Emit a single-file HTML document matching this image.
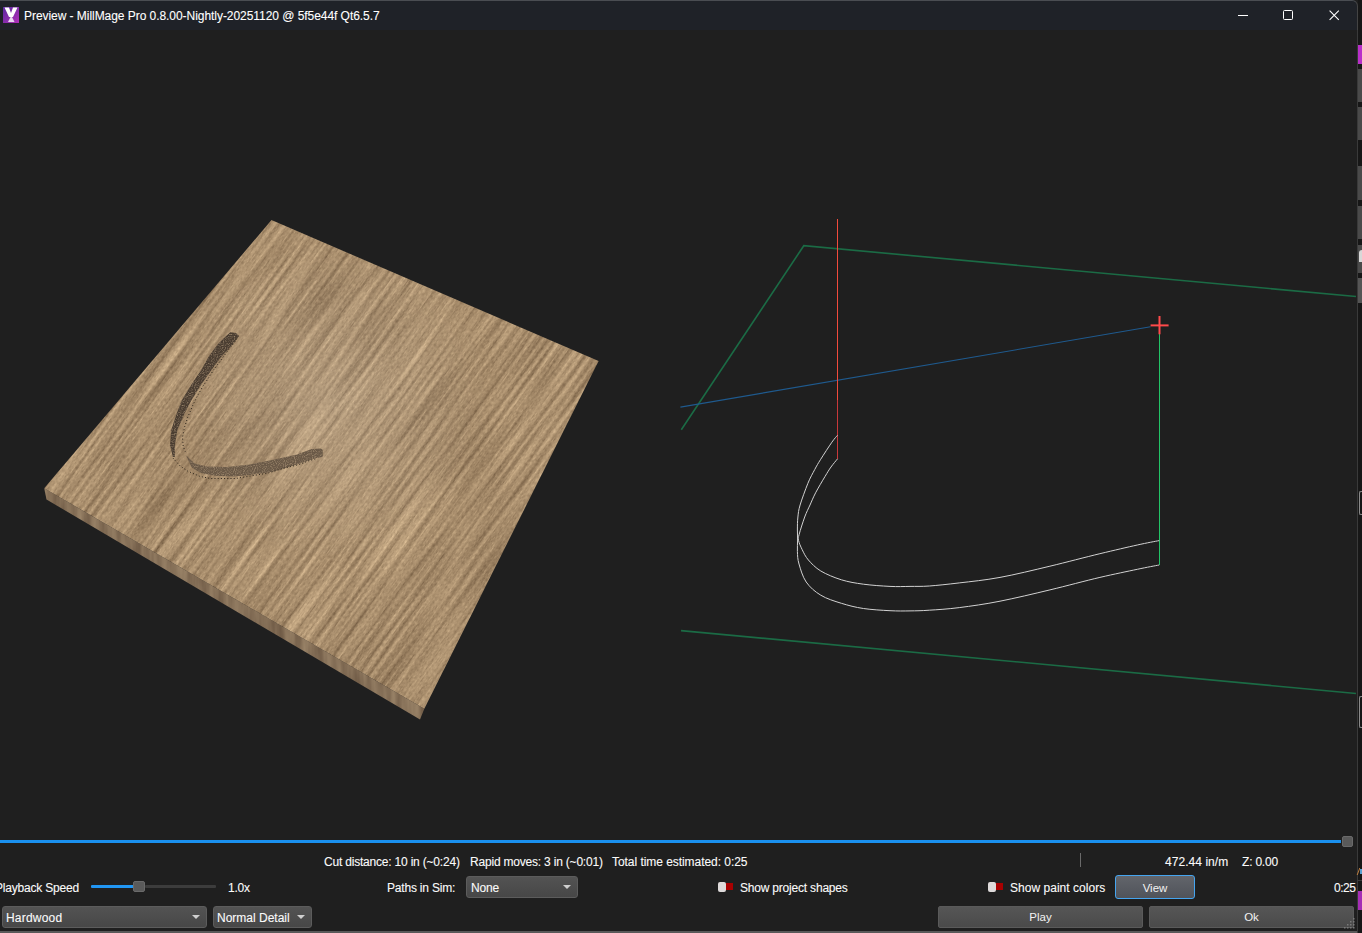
<!DOCTYPE html>
<html><head><meta charset="utf-8">
<style>
*{margin:0;padding:0;box-sizing:border-box}
html,body{width:1362px;height:933px;overflow:hidden;background:#1f1f1f;font-family:"Liberation Sans",sans-serif;color:#fff}
.abs{position:absolute}
#title{left:0;top:0;width:1358px;height:30px;background:#1f2228;border-top:1px solid #4a4d52;border-right:1px solid #444;border-top-right-radius:6px}
.t{position:absolute;white-space:nowrap;font-size:12px;letter-spacing:-0.2px;line-height:14px;color:#fafafa;-webkit-text-stroke:0.2px rgba(255,255,255,0.6)}
.combo{position:absolute;background:linear-gradient(#535353,#474747);border:1px solid #5c5c5c;border-radius:3px}
.btn{position:absolute;background:linear-gradient(#565656,#4a4a4a);border:1px solid #5a5a5a;border-radius:2px;text-align:center;font-size:11.5px;color:#f2f2f2}
.arrow{position:absolute;width:0;height:0;border-left:4px solid transparent;border-right:4px solid transparent;border-top:4px solid #cfcfcf}
</style></head>
<body>
<div id="title" class="abs"></div>
<div class="abs" style="left:1358px;top:0;width:4px;height:933px;background:#171717"></div>
<div class="abs" style="left:1357px;top:30px;width:1px;height:903px;background:#3a3a3a"></div>
<div class="abs" style="left:1358px;top:45px;width:4px;height:19px;background:#b92fc9"></div>
<div class="abs" style="left:1358px;top:69px;width:4px;height:33px;background:#4a4a4a"></div>
<div class="abs" style="left:1358px;top:107px;width:4px;height:33px;background:#4a4a4a"></div>
<div class="abs" style="left:1358px;top:166px;width:4px;height:34px;background:#4a4a4a"></div>
<div class="abs" style="left:1358px;top:206px;width:4px;height:33px;background:#4a4a4a"></div>
<div class="abs" style="left:1358px;top:245px;width:4px;height:28px;background:#4a4a4a"></div>
<div class="abs" style="left:1359px;top:250px;width:3px;height:12px;background:#d8d8d8;border-top-left-radius:3px"></div>
<div class="abs" style="left:1358px;top:278px;width:4px;height:25px;background:#555"></div>
<div class="abs" style="left:1359px;top:491px;width:3px;height:24px;border:1px solid #8a8a8a;border-right:none;border-radius:2px 0 0 2px"></div>
<div class="abs" style="left:1359px;top:696px;width:3px;height:32px;border:1px solid #8a8a8a;border-right:none;border-radius:2px 0 0 2px"></div>
<div class="abs" style="left:1358px;top:891px;width:4px;height:19px;background:#a52db5"></div>
<div class="abs" style="left:1358px;top:880px;width:4px;height:1px;background:#3a3a3a"></div>
<div class="abs" style="left:1358px;top:868px;width:1px;height:7px;background:#c08040;transform:skewX(-20deg)"></div>
<div class="abs" style="left:1360px;top:869px;width:2px;height:5px;background:#5aa0d0"></div>


<!-- title icon -->
<svg class="abs" style="left:3px;top:7px" width="17" height="17" viewBox="0 0 17 17">
<defs><linearGradient id="ig" x1="0" y1="0" x2="1" y2="1"><stop offset="0" stop-color="#5a2aa0"/><stop offset="1" stop-color="#b030b8"/></linearGradient></defs>
<rect x="0" y="0" width="16" height="16" fill="url(#ig)"/>
<path d="M1.5 0.5 L6 0.5 L8 6 L10 0.5 L14.5 0.5 L10 10 L6 10 Z" fill="#fff"/>
<path d="M5 15 L7.5 10 L9 10 L11.5 15 Z" fill="#e8d8f0"/>
</svg>
<div class="t" style="left:24px;top:9px;font-size:12px;letter-spacing:-0.05px;color:#fff">Preview - MillMage Pro 0.8.00-Nightly-20251120 @ 5f5e44f Qt6.5.7</div>

<!-- window controls -->
<div class="abs" style="left:1238px;top:15px;width:10px;height:1px;background:#fff"></div>
<div class="abs" style="left:1283px;top:10px;width:10px;height:10px;border:1px solid #fff;border-radius:1.5px"></div>
<svg class="abs" style="left:1329px;top:10px" width="11" height="11" viewBox="0 0 11 11"><path d="M0.6 0.6L9.8 9.8M9.8 0.6L0.6 9.8" stroke="#fff" stroke-width="1.1"/></svg>

<!-- 3D scene -->
<svg class="abs" style="left:0;top:0" width="1362" height="933" viewBox="0 0 1362 933">
<defs>
<filter id="wood" x="0" y="0" width="100%" height="100%" color-interpolation-filters="sRGB">
 <feTurbulence type="fractalNoise" baseFrequency="0.008 0.25" numOctaves="4" seed="11" result="t1"/>
 <feColorMatrix in="t1" type="matrix" values="1 0 0 0 0  1 0 0 0 0  1 0 0 0 0  0 0 0 0 1" result="n1"/>
 <feTurbulence type="fractalNoise" baseFrequency="0.3 0.8" numOctaves="2" seed="4" result="t2"/>
 <feColorMatrix in="t2" type="matrix" values="1 0 0 0 0  1 0 0 0 0  1 0 0 0 0  0 0 0 0 1" result="n2"/>
 <feTurbulence type="fractalNoise" baseFrequency="0.006 0.012" numOctaves="2" seed="9" result="t3"/>
 <feColorMatrix in="t3" type="matrix" values="1 0 0 0 0  1 0 0 0 0  1 0 0 0 0  0 0 0 0 1" result="n3"/>
 <feComposite in="n1" in2="n2" operator="arithmetic" k1="0" k2="0.75" k3="0.45" k4="-0.1" result="n12"/>
 <feComposite in="n12" in2="n3" operator="arithmetic" k1="0" k2="1" k3="0.15" k4="-0.075" result="n"/>
 <feColorMatrix type="matrix" in="n" values="0.52 0 0 0 0.40  0.49 0 0 0 0.31  0.42 0 0 0 0.215  0 0 0 0 1"/>
</filter>
<filter id="wood2" x="0" y="0" width="100%" height="100%" color-interpolation-filters="sRGB">
 <feTurbulence type="fractalNoise" baseFrequency="0.12 0.015" numOctaves="3" seed="7" result="n"/>
 <feColorMatrix type="matrix" in="n" values="0.25 0 0 0 0.40  0.24 0 0 0 0.32  0.2 0 0 0 0.245  0 0 0 0 1"/>
</filter>
<filter id="speck" x="0" y="0" width="100%" height="100%" color-interpolation-filters="sRGB">
 <feTurbulence type="fractalNoise" baseFrequency="0.9" numOctaves="1" seed="2" result="t"/>
 <feColorMatrix in="t" type="matrix" values="0 0 0 0 0.78  0 0 0 0 0.68  0 0 0 0 0.55  1.6 0 0 0 -0.72" result="sp"/>
 <feComposite in="sp" in2="SourceGraphic" operator="in" result="spc"/>
 <feMerge><feMergeNode in="SourceGraphic"/><feMergeNode in="spc"/></feMerge>
</filter>
<clipPath id="topface"><polygon points="271.5,220 598.6,361 424.3,708.8 44.2,488.3"/></clipPath>
<clipPath id="sideface"><polygon points="44.2,488.3 424.3,708.8 420,719.5 46.5,499.5"/></clipPath>
</defs>
<g clip-path="url(#sideface)"><rect x="40" y="480" width="400" height="250" fill="#8f7454" filter="url(#wood2)"/></g>
<defs><radialGradient id="hl" cx="330" cy="400" r="160" gradientUnits="userSpaceOnUse"><stop offset="0" stop-color="#fff" stop-opacity="0.09"/><stop offset="1" stop-color="#fff" stop-opacity="0"/></radialGradient></defs>
<g clip-path="url(#topface)"><g transform="rotate(-54 321 464)"><rect x="-100" y="140" width="842" height="648" fill="#b0906a" filter="url(#wood)"/></g><rect x="0" y="200" width="620" height="540" fill="url(#hl)"/></g>
<!-- groove -->
<polygon points="230.3,332.2 224,338 218,344 209,356 201.2,370 191,385 181.9,400 176.1,415 171.3,430 170,445 172.9,457 174.8,457 174.8,445 177.4,430 183.8,415 191.5,400 201,385 211.5,370 221,357 233,344 238.9,336.1 236,333" fill="#4a3d31" filter="url(#speck)"/>
<polygon points="185.9,455.3 194.7,463.5 206.4,466.4 227,467 250,464.4 273.5,459.7 297,454.4 311.7,449.1 320.5,448.5 322.8,449.7 322.8,456.7 314.6,458.5 297,464.4 273.5,471.4 250,475 232.9,476.4 215.2,475.8 200.6,472.9 191.7,467.6" fill="#6a5947" filter="url(#speck)"/>
<polyline points="238.3,335.8 235.1,341.9 230.9,346.7 224.4,355.4 218.6,363.2 213.4,370.2 207.7,379.2 202.5,386.9 197.4,396 193.4,403.9 187.7,417.4 184.4,427.7 182.5,437.3 183.2,446.3 185.3,451.7" fill="none" stroke="#1e1812" stroke-width="0.9" stroke-dasharray="1 2.2"/>
<polyline points="172.9,458 180,465.8 187.6,471.1 200,476.4 210.5,478.5 235.8,478.5 250,476.1 267.6,473.2 285.2,467.9 299.9,464.4 308.7,460.8 317,458.5" fill="none" stroke="#1e1812" stroke-width="0.9" stroke-dasharray="1 2.2"/>
<!-- wireframe -->
<polyline points="681.3,429.7 803.8,245.7 1356,296.5" fill="none" stroke="#1b6b45" stroke-width="1.6"/>
<line x1="681" y1="630.6" x2="1356" y2="693.5" stroke="#1b6b45" stroke-width="1.6"/>
<line x1="680.4" y1="407.1" x2="1150.6" y2="326.8" stroke="#1f5a8e" stroke-width="1.1"/>
<line x1="837.5" y1="219" x2="837.5" y2="400" stroke="#f24a3c" stroke-width="1"/>
<line x1="837.5" y1="400" x2="837.5" y2="459" stroke="#c8383a" stroke-width="1"/>
<line x1="1159.5" y1="334" x2="1159.5" y2="565" stroke="#22c466" stroke-width="1"/>
<line x1="1150.6" y1="325.4" x2="1168.6" y2="325.4" stroke="#ff4a4a" stroke-width="2"/>
<line x1="1159.5" y1="316" x2="1159.5" y2="334.3" stroke="#ff4a4a" stroke-width="2"/>
<path fill="none" stroke="#d2d2d2" stroke-width="1" d="M837.5,435.3 C836.6,436.4 834.7,438.2 831.9,442.2 C829.1,446.2 823.6,454.7 820.7,459.3 C817.8,463.9 816.8,465.6 814.7,469.6 C812.6,473.6 810.3,477.4 807.9,483.3 C805.5,489.2 801.8,499.4 800.1,505.0 C798.4,510.6 798.4,512.8 797.9,517.0 C797.4,521.2 797.4,526.2 797.4,530.0 C797.4,533.8 797.6,536.4 797.6,540.0 C797.6,543.6 797.2,547.5 797.4,551.5 C797.6,555.5 797.5,558.9 799.0,564.0 C800.5,569.1 802.6,576.8 806.2,582.0 C809.8,587.2 814.9,591.7 820.8,595.2 C826.7,598.8 834.3,601.1 841.4,603.3 C848.5,605.5 855.3,607.3 863.4,608.5 C871.5,609.7 882.2,610.3 890.0,610.7 C897.8,611.1 903.5,611.0 910.0,610.9 C916.5,610.8 921.1,610.8 929.3,610.2 C937.5,609.7 947.5,609.1 959.3,607.6 C971.1,606.1 984.9,604.2 1000.0,601.2 C1015.1,598.2 1033.2,593.9 1049.9,589.9 C1066.6,585.9 1085.3,580.8 1099.9,577.4 C1114.5,574.0 1127.4,571.4 1137.3,569.3 C1147.2,567.2 1155.5,565.7 1159.2,565.0"/>
<path fill="none" stroke="#d2d2d2" stroke-width="1" d="M837.5,458.9 C836.4,460.2 833.1,464.1 831.0,467.0 C828.9,469.9 827.6,472.2 825.0,476.5 C822.4,480.8 818.1,488.1 815.6,492.8 C813.1,497.6 811.8,501.0 810.0,505.0 C808.2,509.0 806.5,512.1 804.7,517.0 C802.9,521.9 800.2,530.4 799.2,534.3 C798.2,538.2 798.0,537.7 798.5,540.3 C799.0,542.9 800.6,546.4 802.2,549.7 C803.9,553.0 805.3,556.5 808.4,560.0 C811.5,563.5 815.3,567.7 820.8,571.0 C826.3,574.3 834.3,577.6 841.4,579.8 C848.5,582.0 855.3,583.1 863.4,584.2 C871.5,585.3 882.2,586.0 890.0,586.4 C897.8,586.8 903.5,586.5 910.0,586.4 C916.5,586.3 921.1,586.6 929.3,586.0 C937.5,585.4 947.5,584.3 959.3,582.9 C971.1,581.5 984.9,580.2 1000.0,577.4 C1015.1,574.6 1033.2,570.2 1049.9,566.2 C1066.6,562.2 1085.3,557.2 1099.9,553.7 C1114.5,550.2 1127.4,547.2 1137.3,545.0 C1147.2,542.8 1155.5,541.3 1159.2,540.6"/>
</svg>

<!-- bottom panel -->
<div class="abs" style="left:0;top:840px;width:1341px;height:3px;background:#1a90ee"></div>
<div class="abs" style="left:1342px;top:836px;width:11px;height:11px;background:#5a5a5a;border:1px solid #6a6a6a;border-radius:2px"></div>

<div class="t" style="left:324px;top:855px">Cut distance: 10 in (~0:24)</div>
<div class="t" style="left:470px;top:855px">Rapid moves: 3 in (~0:01)</div>
<div class="t" style="left:612px;top:855px;letter-spacing:-0.05px">Total time estimated: 0:25</div>
<div class="abs" style="left:1080px;top:853px;width:1px;height:14px;background:#6a6a6a"></div>
<div class="t" style="left:1165px;top:855px;letter-spacing:0.05px">472.44 in/m</div>
<div class="t" style="left:1242px;top:855px">Z: 0.00</div>

<div class="t" style="left:-5px;top:881px">Playback Speed</div>
<div class="abs" style="left:91px;top:885px;width:43px;height:3px;background:#2196f3;border-radius:1px"></div>
<div class="abs" style="left:145px;top:885px;width:71px;height:3px;background:#3c3c3c;border-radius:1px"></div>
<div class="abs" style="left:133px;top:881px;width:12px;height:11px;background:#5a5a5a;border:1px solid #6a6a6a;border-radius:2px"></div>
<div class="t" style="left:228px;top:881px">1.0x</div>

<div class="t" style="left:387px;top:881px">Paths in Sim:</div>
<div class="combo" style="left:466px;top:876px;width:112px;height:22px"></div>
<div class="t" style="left:471px;top:881px">None</div>
<div class="arrow" style="left:563px;top:885px"></div>

<div class="abs" style="left:726px;top:883px;width:7px;height:7px;background:#a80000"></div>
<div class="abs" style="left:718px;top:882px;width:8px;height:10px;background:#dedada;border-radius:2px"></div>
<div class="t" style="left:740px;top:881px">Show project shapes</div>

<div class="abs" style="left:996px;top:883px;width:7px;height:7px;background:#a80000"></div>
<div class="abs" style="left:988px;top:882px;width:8px;height:10px;background:#dedada;border-radius:2px"></div>
<div class="t" style="left:1010px;top:881px;letter-spacing:0.03px">Show paint colors</div>

<div class="btn" style="left:1115px;top:875px;width:80px;height:24px;border:1.5px solid #45a5f0;border-radius:3px;background:linear-gradient(#62656b,#50535a);line-height:22px;padding-top:1px">View</div>
<div class="t" style="left:1334px;top:881px;letter-spacing:-0.5px">0:25</div>

<div class="combo" style="left:2px;top:906px;width:205px;height:22px"></div>
<div class="t" style="left:6px;top:911px;letter-spacing:0.2px">Hardwood</div>
<div class="arrow" style="left:192px;top:915px"></div>
<div class="combo" style="left:213px;top:906px;width:99px;height:22px"></div>
<div class="t" style="left:217px;top:911px;letter-spacing:0px">Normal Detail</div>
<div class="arrow" style="left:297px;top:915px"></div>

<div class="btn" style="left:938px;top:906px;width:205px;height:22px;line-height:21px">Play</div>
<div class="btn" style="left:1149px;top:906px;width:205px;height:22px;line-height:21px">Ok</div>

<div class="abs" style="left:0;top:931px;width:1357px;height:2px;background:#595959"></div>
<svg class="abs" style="left:1344px;top:918px" width="12" height="12" viewBox="0 0 12 12" fill="#7a7a7a">
<rect x="9" y="0" width="1.5" height="1.5"/><rect x="6" y="3" width="1.5" height="1.5"/><rect x="9" y="3" width="1.5" height="1.5"/>
<rect x="3" y="6" width="1.5" height="1.5"/><rect x="6" y="6" width="1.5" height="1.5"/><rect x="9" y="6" width="1.5" height="1.5"/>
<rect x="0" y="9" width="1.5" height="1.5"/><rect x="3" y="9" width="1.5" height="1.5"/><rect x="6" y="9" width="1.5" height="1.5"/><rect x="9" y="9" width="1.5" height="1.5"/>
</svg>
</body></html>
